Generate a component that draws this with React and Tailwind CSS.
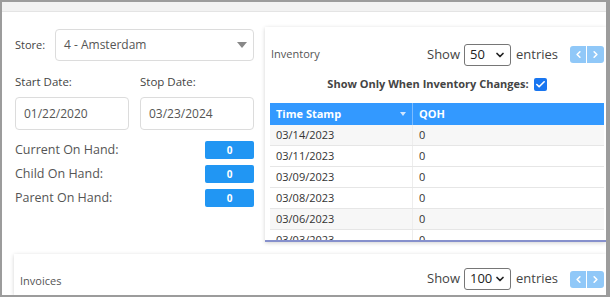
import { ChevronLeft, ChevronRight, ChevronDown, Check } from 'lucide-react'

const rows = ['03/14/2023', '03/11/2023', '03/09/2023', '03/08/2023', '03/06/2023', '03/03/2023']

function Pager() {
  return (
    <div className="flex gap-px">
      <button className="w-[16px] h-[17px] bg-[#90c8f8] rounded-l-[3px] flex items-center justify-center">
        <ChevronLeft size={11} strokeWidth={3.5} className="text-white" />
      </button>
      <button className="w-[17px] h-[17px] bg-[#90c8f8] rounded-r-[3px] flex items-center justify-center">
        <ChevronRight size={11} strokeWidth={3.5} className="text-white" />
      </button>
    </div>
  )
}

function ShowEntries({ value }) {
  return (
    <div className="flex items-center text-[13px] text-[#444]">
      <span>Show</span>
      <div className="ml-[4px] w-[47px] h-[22px] border border-[#767676] rounded-[3px] flex items-center justify-between pl-[5px] pr-[4px] text-[#222]">
        <span>{value}</span>
        <ChevronDown size={12} strokeWidth={3.5} />
      </div>
      <span className="ml-[5px]">entries</span>
      <div className="ml-[12px]"><Pager /></div>
    </div>
  )
}

function Stat({ label }) {
  return (
    <div className="flex items-center justify-between h-[18px]">
      <span className="text-[12.5px] text-[#555]">{label}</span>
      <span className="w-[49px] h-[18px] bg-[#2196f3] rounded-[2px] text-white text-[10px] font-bold flex items-center justify-center">0</span>
    </div>
  )
}

export default function App() {
  return (
    <div className="w-[610px] h-[297px] overflow-hidden bg-white border-t-2 border-l-2 border-b-2 border-r-4 border-[#9c9c9c] flex flex-col" style={{ fontFamily: '"Open Sans", sans-serif' }}>
      <div className="h-[10px] shrink-0 bg-[#f2f2f2] border-b border-[#e4e4e4]"></div>

      <div className="flex items-start pl-[13px] shrink-0">
        <div className="w-[239px] pt-[17px]">
          <div className="flex items-center">
            <span className="w-[40px] text-[11px] text-[#444]">Store:</span>
            <div className="flex-1 h-[32px] border border-[#dcdcdc] rounded-[4px] flex items-center justify-between pl-[8px] pr-[6px] text-[12px] text-[#555]">
              <span>4 - Amsterdam</span>
              <svg width="10" height="6" viewBox="0 0 10 6"><path d="M0 0h10L5 6z" fill="#888" /></svg>
            </div>
          </div>
          <div className="flex gap-[11px] mt-[13px]">
            <div className="flex-1">
              <div className="text-[11.5px] text-[#444] leading-[16px]">Start Date:</div>
              <div className="mt-[7px] h-[33px] border border-[#dcdcdc] rounded-[4px] flex items-center pl-[8px] text-[12px] text-[#555]">01/22/2020</div>
            </div>
            <div className="flex-1">
              <div className="text-[11.5px] text-[#444] leading-[16px]">Stop Date:</div>
              <div className="mt-[7px] h-[33px] border border-[#dcdcdc] rounded-[4px] flex items-center pl-[8px] text-[12px] text-[#555]">03/23/2024</div>
            </div>
          </div>
          <div className="mt-[11px] flex flex-col gap-[6px]">
            <Stat label="Current On Hand:" />
            <Stat label="Child On Hand:" />
            <Stat label="Parent On Hand:" />
          </div>
        </div>

        <div className="ml-[11px] mt-[15px] flex-1 h-[215px] bg-white shadow-[0_1px_4px_rgba(0,0,0,0.18)] border-b-2 border-[#8690cc] pl-[5px] pr-[2px] pt-[17px] flex flex-col">
          <div className="flex items-center justify-between h-[21px] pl-[1px]">
            <span className="text-[11px] text-[#555]">Inventory</span>
            <ShowEntries value="50" />
          </div>
          <div className="mt-[11px] flex items-center justify-center gap-[5px] h-[17px] text-[11px] font-bold text-[#444]">
            <span>Show Only When Inventory Changes:</span>
            <span className="w-[13px] h-[13px] bg-[#1976f0] rounded-[2px] flex items-center justify-center">
              <Check size={11} strokeWidth={3.5} className="text-white" />
            </span>
          </div>
          <div className="mt-[10px] flex-1 min-h-0 overflow-hidden">
            <div className="flex h-[22px] bg-[#3399ff] text-white text-[11px] font-bold">
              <div className="w-[143px] flex items-center justify-between pl-[6px] pr-[6px] border-r border-[#7cbcff]">
                <span>Time Stamp</span>
                <svg width="6" height="4" viewBox="0 0 6 4"><path d="M0 0h6L3 4z" fill="#cfe6ff" /></svg>
              </div>
              <div className="flex-1 flex items-center pl-[6px]">QOH</div>
            </div>
            {rows.map((d, i) => (
              <div key={d} className={`flex h-[21px] text-[11px] text-[#333] border-b border-[#e6e6e6] ${i === 0 || i === 4 ? 'bg-[#f7f7f7]' : 'bg-white'}`}>
                <div className="w-[143px] flex items-center pl-[6px] border-r border-[#ededed]">{d}</div>
                <div className="flex-1 flex items-center pl-[6px]">0</div>
              </div>
            ))}
          </div>
        </div>
      </div>

      <div className="ml-[12px] mt-[12px] flex-1 bg-white shadow-[0_1px_4px_rgba(0,0,0,0.18)] pl-[6px] pr-[2px] pt-[14px] flex items-start justify-between">
        <span className="text-[11px] text-[#555] mt-[5px]">Invoices</span>
        <ShowEntries value="100" />
      </div>
    </div>
  )
}
